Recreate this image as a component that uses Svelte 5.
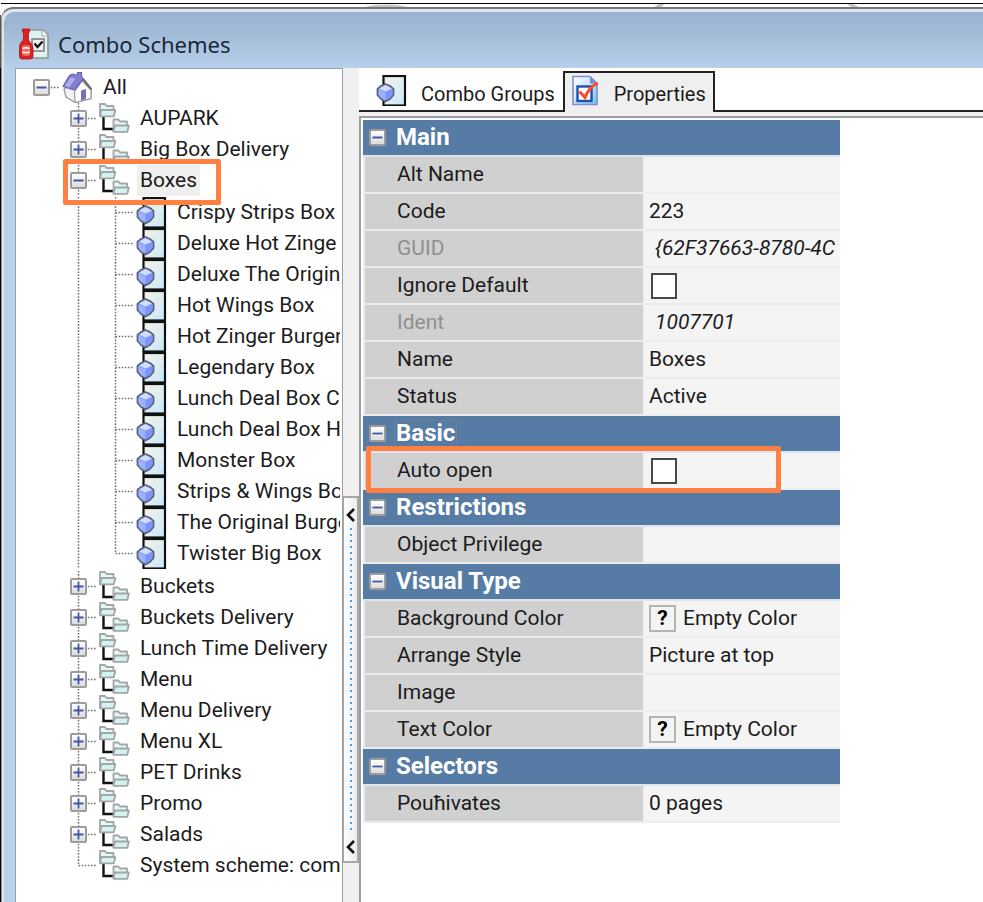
<script>
    let activeTab = $state('properties');
    let rootOpen = $state(true);

    let groups = $state([
        { name: 'AUPARK' },
        { name: 'Big Box Delivery' },
        {
            name: 'Boxes',
            open: true,
            selected: true,
            marked: true,
            items: [
                'Crispy Strips Box',
                'Deluxe Hot Zinge',
                'Deluxe The Origin',
                'Hot Wings Box',
                'Hot Zinger Burger',
                'Legendary Box',
                'Lunch Deal Box C',
                'Lunch Deal Box H',
                'Monster Box',
                'Strips & Wings Bo',
                'The Original Burge',
                'Twister Big Box'
            ]
        },
        { name: 'Buckets' },
        { name: 'Buckets Delivery' },
        { name: 'Lunch Time Delivery' },
        { name: 'Menu' },
        { name: 'Menu Delivery' },
        { name: 'Menu XL' },
        { name: 'PET Drinks' },
        { name: 'Promo' },
        { name: 'Salads' },
        { name: 'System scheme: comb', leaf: true }
    ]);

    let sections = $state([
        {
            title: 'Main',
            open: true,
            rows: [
                { label: 'Alt Name', value: '' },
                { label: 'Code', value: '223' },
                { label: 'GUID', value: '{62F37663-8780-4C', readonly: true },
                { label: 'Ignore Default', type: 'check', value: false },
                { label: 'Ident', value: '1007701', readonly: true },
                { label: 'Name', value: 'Boxes' },
                { label: 'Status', value: 'Active' }
            ]
        },
        {
            title: 'Basic',
            open: true,
            focused: true,
            rows: [{ label: 'Auto open', type: 'check', value: false, marked: true }]
        },
        {
            title: 'Restrictions',
            open: true,
            rows: [{ label: 'Object Privilege', value: '' }]
        },
        {
            title: 'Visual Type',
            open: true,
            rows: [
                { label: 'Background Color', type: 'color', value: 'Empty Color' },
                { label: 'Arrange Style', value: 'Picture at top' },
                { label: 'Image', value: '' },
                { label: 'Text Color', type: 'color', value: 'Empty Color' }
            ]
        },
        {
            title: 'Selectors',
            open: true,
            rows: [{ label: 'Pouħivates', value: '0 pages' }]
        }
    ]);

    const slug = (label) => label.toLowerCase().replace(/ /g, '-');
</script>

{#snippet lines(d)}
    <svg class="lines" width="37" height="31" viewBox="0 0 37 31" aria-hidden="true">
        <path {d} fill="none" stroke="#707070" stroke-width="1.5" stroke-dasharray="1.6 1.5" />
    </svg>
{/snippet}

{#snippet toggle(open, label, onclick)}
    <button class="toggle" aria-expanded={open} aria-label={label} {onclick}>
        <svg width="13" height="13" viewBox="0 0 13 13" aria-hidden="true">
            <path d={open ? 'M1.5 6.5h10' : 'M1.5 6.5h10M6.5 1.5v10'} stroke="#4159a5" stroke-width="1.8" />
        </svg>
    </button>
{/snippet}

{#snippet folderIcon()}
    <svg class="icon" width="31" height="31" viewBox="0 0 31 31" aria-hidden="true">
        <path d="M4.5 12v14h10" fill="none" stroke="#111" stroke-width="2.4" />
        {#each ['translate(0 0)', 'translate(13.500 15.500)'] as transform}
            <g {transform} stroke="#a3a6a5" stroke-width="1.8" stroke-linejoin="round">
                <path d="M1 12.500V1h5l1.500 2h7v4l1.500.500-1.500 5z" fill="#e2f8f7" />
                <path d="M1 12.800 2.500 7H16.300L14.800 13.300H1z" fill="#d3f3f2" />
            </g>
        {/each}
    </svg>
{/snippet}

{#snippet comboIcon()}
    <svg class="icon" width="31" height="31" viewBox="0 0 31 31" aria-hidden="true">
        <defs>
            <linearGradient id="sheet" x1="0" y1="0" x2="1" y2="1">
                <stop offset="0" stop-color="#f4f3e6" />
                <stop offset="0.6" stop-color="#dcedf2" />
                <stop offset="1" stop-color="#c5e6fa" />
            </linearGradient>
        </defs>
        <rect x="7.500" y="1" width="21.500" height="29.500" fill="url(#sheet)" stroke="#111" stroke-width="2.200" />
        <path d="M9.500 9 14 11l3.500 3v6L14 24l-4.500 2.500L5 24l-3.500-4v-6L5 11z" fill="#87a0fa" stroke="#59627c" stroke-width="1.8" stroke-linejoin="round" />
        <path d="M9.500 10 16 13.500 9.500 16.500 3 13.500z" fill="#d3ddff" />
        <path d="M2.500 14.500 9 17.500V25L5 23 2.500 19.500z" fill="#9db2ff" />
        <path d="M16.500 14.500 10 17.500V25l4-2 2.500-3.500z" fill="#7c94fa" />
    </svg>
{/snippet}

<div class="backdrop">
    <svg class="behind" width="983" height="4" viewBox="0 0 983 3" aria-hidden="true">
        <path d="M364 3q20-5 44 0zM654 3l4-3h6l-3 3zM851 3l-4-3h6l6 3z" fill="#c4c4c4" />
    </svg>
    <div class="window">
        <header class="titlebar">
            <svg width="30" height="32" viewBox="0 0 30 32" aria-hidden="true">
                <path d="M7 2h17l5 5v23H7z" fill="#def3f2" stroke="#8e9896" stroke-width="1.600" />
                <path d="M23 2v6h6" fill="#f8ffff" stroke="#9aa3a1" />
                <rect x="13" y="11" width="12" height="12" fill="#f1f1f1" stroke="#8c8c8c" stroke-width="1.800" />
                <path d="m15.500 15.500 3 3.500 5-5.500" fill="none" stroke="#111" stroke-width="2.200" />
                <path d="M3.500 1h7v3l-1 1v6q0 2 2 4 2.500 2 2.500 5v8q0 3-3 3H3q-2.500 0-2.500-3v-9q0-3 2-5 2-1.500 2-3V5l-1-1z" fill="#dd2020" stroke="#a51616" stroke-width="0.800" />
                <path d="M3 18q4-2 8 0v9q-4 2-8 0z" fill="#f26a5a" />
                <path d="M3.500 20.500q3.500-1.500 7 0M3.500 24q3.500 1.500 7 0" fill="none" stroke="#fff" stroke-width="1.500" />
            </svg>
            <h1>Combo Schemes</h1>
        </header>

        <div class="body">
            <nav class="tree" aria-label="Combo schemes">
                <ul>
                    <li>
                        <div class="row">
                            <span class="guide">
                                {@render lines('M18.500 15.500h18.500')}
                                {@render toggle(rootOpen, 'All', () => (rootOpen = !rootOpen))}
                            </span>
                            <svg class="icon" width="31" height="31" viewBox="0 0 31 31" aria-hidden="true">
                                <path d="M2 17 12 11 22 8 29 18V26.500L13 30.500 4 25z" fill="#f3f3f5" stroke="#9c9ca0" stroke-width="1.400" stroke-linejoin="round" />
                                <path d="M12.500 20 20 8.500 29 18V26.500L13 30.500z" fill="#fff" stroke="#9c9ca0" stroke-width="1.200" stroke-linejoin="round" />
                                <path d="M1 14.500 6.500 5 9 2.500 11.500 2l1 1 3-.500V.500h4v4L21.500 7 12 18z" fill="#8280d2" stroke="#6664b4" stroke-width="1.200" stroke-linejoin="round" />
                                <path d="m3 13.500 5.500-8 5 1-6.500 9z" fill="#b0afec" />
                                <path d="m21 7 8.500 10.500" stroke="#6c6c74" stroke-width="2" />
                                <path d="M19 18.500 24 17V27l-5 1.500z" fill="#7374b5" />
                            </svg>
                            <span class="name">All</span>
                        </div>
                        {#if rootOpen}
                            <ul>
                                {#each groups as group, i}
                                    <li>
                                        <div class="row" class:marked={group.marked}>
                                            <span class="guide"></span>
                                            <span class="guide">
                                                {@render lines(
                                                    i == groups.length - 1
                                                        ? 'M18.500 0v15.500h18.500'
                                                        : 'M18.500 0v31M18.500 15.500h18.500'
                                                )}
                                                {#if !group.leaf}
                                                    {@render toggle(!!group.open, group.name, () => (group.open = !group.open))}
                                                {/if}
                                            </span>
                                            {@render folderIcon()}
                                            <span class="name" class:selected={group.selected}>{group.name}</span>
                                        </div>
                                        {#if group.open && group.items}
                                            <ul class="items">
                                                {#each group.items as item, j}
                                                    <li class="row">
                                                        <span class="guide"></span>
                                                        <span class="guide">{@render lines('M18.500 0v31')}</span>
                                                        <span class="guide">
                                                            {@render lines(
                                                                j == group.items.length - 1
                                                                    ? 'M18.500 0v15.500h18.500'
                                                                    : 'M18.500 0v31M18.500 15.500h18.500'
                                                            )}
                                                        </span>
                                                        {@render comboIcon()}
                                                        <span class="name">{item}</span>
                                                    </li>
                                                {/each}
                                            </ul>
                                        {/if}
                                    </li>
                                {/each}
                            </ul>
                        {/if}
                    </li>
                </ul>
            </nav>

            <div class="splitter">
                <button class="handle" aria-label="Collapse tree">
                    <svg width="9" height="14" viewBox="0 0 9 14" aria-hidden="true">
                        <path d="M8 1 2 7l6 6" fill="none" stroke="#111" stroke-width="2.600" />
                    </svg>
                    <span class="dots"></span>
                    <svg width="9" height="14" viewBox="0 0 9 14" aria-hidden="true">
                        <path d="M8 1 2 7l6 6" fill="none" stroke="#111" stroke-width="2.600" />
                    </svg>
                </button>
            </div>

            <main>
                <div class="tabs" role="tablist">
                    <button
                        class="tab"
                        class:active={activeTab == 'groups'}
                        role="tab"
                        aria-selected={activeTab == 'groups'}
                        onclick={() => (activeTab = 'groups')}
                    >
                        {@render comboIcon()}
                        <span>Combo Groups</span>
                    </button>
                    <button
                        class="tab"
                        class:active={activeTab == 'properties'}
                        role="tab"
                        aria-selected={activeTab == 'properties'}
                        onclick={() => (activeTab = 'properties')}
                    >
                        <svg width="26" height="31" viewBox="0 0 26 31" aria-hidden="true">
                            <defs>
                                <linearGradient id="page" x1="0" y1="0" x2="1" y2="1">
                                    <stop offset="0" stop-color="#fff" />
                                    <stop offset="0.4" stop-color="#d8e8fa" />
                                    <stop offset="1" stop-color="#6fc3ee" />
                                </linearGradient>
                            </defs>
                            <path d="M1 1.500h17l7 7v21H1z" fill="url(#page)" stroke="#7f8fd0" stroke-width="1.600" />
                            <path d="M18 1.500v7h7z" fill="#6d8fd2" />
                            <rect x="5.500" y="11.500" width="14" height="14.500" fill="#fff" stroke="#1f4fb0" stroke-width="2.400" />
                            <path d="m7.500 16.500 5.500 6Q17 12 25.500 8" fill="none" stroke="#fb4a20" stroke-width="3" />
                        </svg>
                        <span>Properties</span>
                    </button>
                </div>

                <div class="page">
                    {#if activeTab == 'properties'}
                        <table>
                            <colgroup>
                                <col class="label-col" />
                                <col />
                            </colgroup>
                            {#each sections as section}
                                <tbody>
                                    <tr class="section">
                                        <th colspan="2" scope="rowgroup">
                                            <div class="heading">
                                                {@render toggle(section.open, section.title, () => (section.open = !section.open))}
                                                <span class:focused={section.focused}>{section.title}</span>
                                            </div>
                                        </th>
                                    </tr>
                                    {#if section.open}
                                        {#each section.rows as row}
                                            <tr class:readonly={row.readonly}>
                                                <th scope="row" class:marked={row.marked}>
                                                    {#if row.type == 'check'}
                                                        <label for={slug(row.label)}>{row.label}</label>
                                                    {:else}
                                                        {row.label}
                                                    {/if}
                                                </th>
                                                <td>
                                                    <div class="value">
                                                        {#if row.type == 'check'}
                                                            <input id={slug(row.label)} type="checkbox" bind:checked={row.value} />
                                                        {:else if row.type == 'color'}
                                                            <span class="swatch">?</span>{row.value}
                                                        {:else}
                                                            {row.value}
                                                        {/if}
                                                    </div>
                                                </td>
                                            </tr>
                                        {/each}
                                    {/if}
                                </tbody>
                            {/each}
                        </table>
                    {/if}
                </div>
            </main>
        </div>
    </div>
</div>

<style>
    :global(body) {
        margin: 0;
        overflow: hidden;
        background: #fff;
    }

    h1, ul, li {
        margin: 0;
        padding: 0;
        list-style: none;
    }

    button {
        font: inherit;
        color: inherit;
        cursor: pointer;
    }

    svg {
        display: block;
        flex: none;
    }

    .backdrop {
        box-sizing: border-box;
        display: flex;
        flex-direction: column;
        height: 100vh;
        padding: 3px 0 0 1px;
        color: #1c1c1c;
        font: 21px/31px Roboto, "Liberation Sans", sans-serif;
        background: linear-gradient(#fff 15px, #555 15px, #555 68px, #000 68px) 0 0 / 1px 100% no-repeat;
    }

    .behind {
        box-sizing: border-box;
        width: 100%;
        border-top: 1px solid #000;
    }

    .window {
        flex: 1;
        min-height: 0;
        display: flex;
        flex-direction: column;
        border-top: 2px solid #777;
        border-left: 1px solid #999;
        border-radius: 12px 0 0 0;
        box-shadow: inset 2px 3px #dfe5ea;
        overflow: hidden;
    }

    .titlebar {
        display: flex;
        align-items: center;
        gap: 9px;
        height: 48px;
        margin: 3px 0 0 2px;
        padding: 8px 0 0 15px;
        border-radius: 10px 0 0 0;
        background: linear-gradient(#98b2d0, #a3bcd8 40%, #b8d0ea);
    }

    h1 {
        color: #1c2836;
        font: 22px/31px "Noto Sans", "Open Sans", sans-serif;
    }

    .body {
        flex: 1;
        min-height: 0;
        display: flex;
        margin-left: 2px;
        border-left: 11px solid #b9d1ea;
        background: #f0f0f0;
    }

    /* tree */
    .tree {
        box-sizing: border-box;
        width: 328px;
        padding: 3px 2px 0 7px;
        border: 1px solid #9a9ea6;
        border-bottom: 0;
        background: #fff;
    }

    .tree > ul {
        overflow: hidden;
    }

    .row {
        display: flex;
        height: 31px;
        white-space: nowrap;
    }

    .items {
        padding: 1px 0 2px;
    }

    .guide {
        display: grid;
        flex: none;
        width: 37px;
        place-items: center;
    }

    .guide :global(> *) {
        grid-area: 1 / 1;
    }

    .toggle {
        display: grid;
        flex: none;
        place-items: center;
        width: 17px;
        height: 17px;
        padding: 0;
        border: 2px solid #9c9c9c;
        border-radius: 2px;
        background: linear-gradient(#fff, #dcdcdc);
    }

    .row .icon {
        margin: 0 7px 0 2px;
    }

    .name {
        padding-left: 3px;
    }

    .selected {
        padding-right: 3px;
        background: #efefef;
    }

    .marked {
        position: relative;
    }

    .marked::after {
        content: "";
        position: absolute;
        z-index: 1;
        border: 5px solid #ff8040;
        border-radius: 2px;
        pointer-events: none;
    }

    .row.marked::after {
        inset: -6px auto -9px 40px;
        width: 148px;
    }

    /* reaches over the value cell too */
    th.marked::after {
        inset: -7px auto -5px 1px;
        width: 405px;
    }

    /* splitter */
    .splitter {
        width: 16px;
        padding-top: 428px;
    }

    .handle {
        box-sizing: border-box;
        display: flex;
        flex-direction: column;
        align-items: center;
        width: 100%;
        height: 367px;
        padding: 10px 0 7px;
        border: 2px solid #a8a8a8;
        border-left-width: 1px;
        background: linear-gradient(90deg, #fff, #ececec);
    }

    .dots {
        flex: 1;
        width: 2px;
        margin: 6px 0;
        background: repeating-linear-gradient(#4aa3e8 0 2px, transparent 2px 6px);
    }

    /* right side */
    main {
        flex: 1;
        min-width: 0;
        display: flex;
        flex-direction: column;
    }

    .tabs {
        display: flex;
        height: 39px;
        padding-top: 3px;
        border-bottom: 2px solid #222;
        background: #fff;
        font-size: 20px;
    }

    .tab {
        box-sizing: border-box;
        display: flex;
        align-items: flex-start;
        gap: 14px;
        height: 41px;
        padding: 4px 8px 0 17px;
        border: 0;
        background: none;
    }

    .tab span {
        padding-top: 4px;
    }

    .tab.active {
        gap: 16px;
        padding: 2px 7px 0;
        border: solid #222;
        border-width: 2px 2px 0;
        background: #efefef;
    }

    .page {
        flex: 1;
        margin-top: 4px;
        padding: 2px 0 0 2px;
        border: solid #9a9ea6;
        border-width: 2px 0 0 2px;
        background: #fff;
    }

    table {
        width: 477px;
        table-layout: fixed;
        border-spacing: 0;
    }

    .label-col {
        width: 282px;
    }

    th, td {
        box-sizing: border-box;
        height: 37px;
        padding: 0;
        border-bottom: 2px solid #ececec;
        text-align: left;
        line-height: 35px;
    }

    th[scope="row"] {
        padding-left: 32px;
        border-left: 2px solid #ececec;
        border-right: 2px solid #f0f0f0;
        font-weight: normal;
        background: #d0d0d0;
    }

    td {
        background: #f4f4f4;
    }

    .section th {
        color: #fff;
        font-size: 24px;
        background: #567ca5;
        border-bottom-color: #dfe5ec;
    }

    .heading {
        display: flex;
        align-items: center;
        gap: 8px;
        height: 35px;
        padding-left: 6px;
    }

    .heading span {
        padding: 0 2px;
        line-height: 27px;
    }

    .heading .focused {
        outline: 1px dotted #9a8468;
        outline-offset: -1px;
    }

    .value {
        display: flex;
        align-items: center;
        height: 35px;
        margin-right: 4px;
        padding-left: 4px;
        overflow: hidden;
        white-space: nowrap;
    }

    tr.readonly th {
        color: #8f8f8f;
    }

    .readonly .value {
        padding-left: 10px;
        font-style: italic;
    }

    input {
        appearance: none;
        box-sizing: border-box;
        width: 26px;
        height: 26px;
        margin: 0 2px;
        border: 2px solid #484848;
        background: #fff;
    }

    input:checked {
        background: #567ca5;
        box-shadow: inset 0 0 0 4px #fff;
    }

    .swatch {
        box-sizing: border-box;
        flex: none;
        width: 27px;
        height: 27px;
        margin-right: 7px;
        border: 2px solid #b4b4b4;
        color: #000;
        font-weight: bold;
        line-height: 23px;
        text-align: center;
    }
</style>
